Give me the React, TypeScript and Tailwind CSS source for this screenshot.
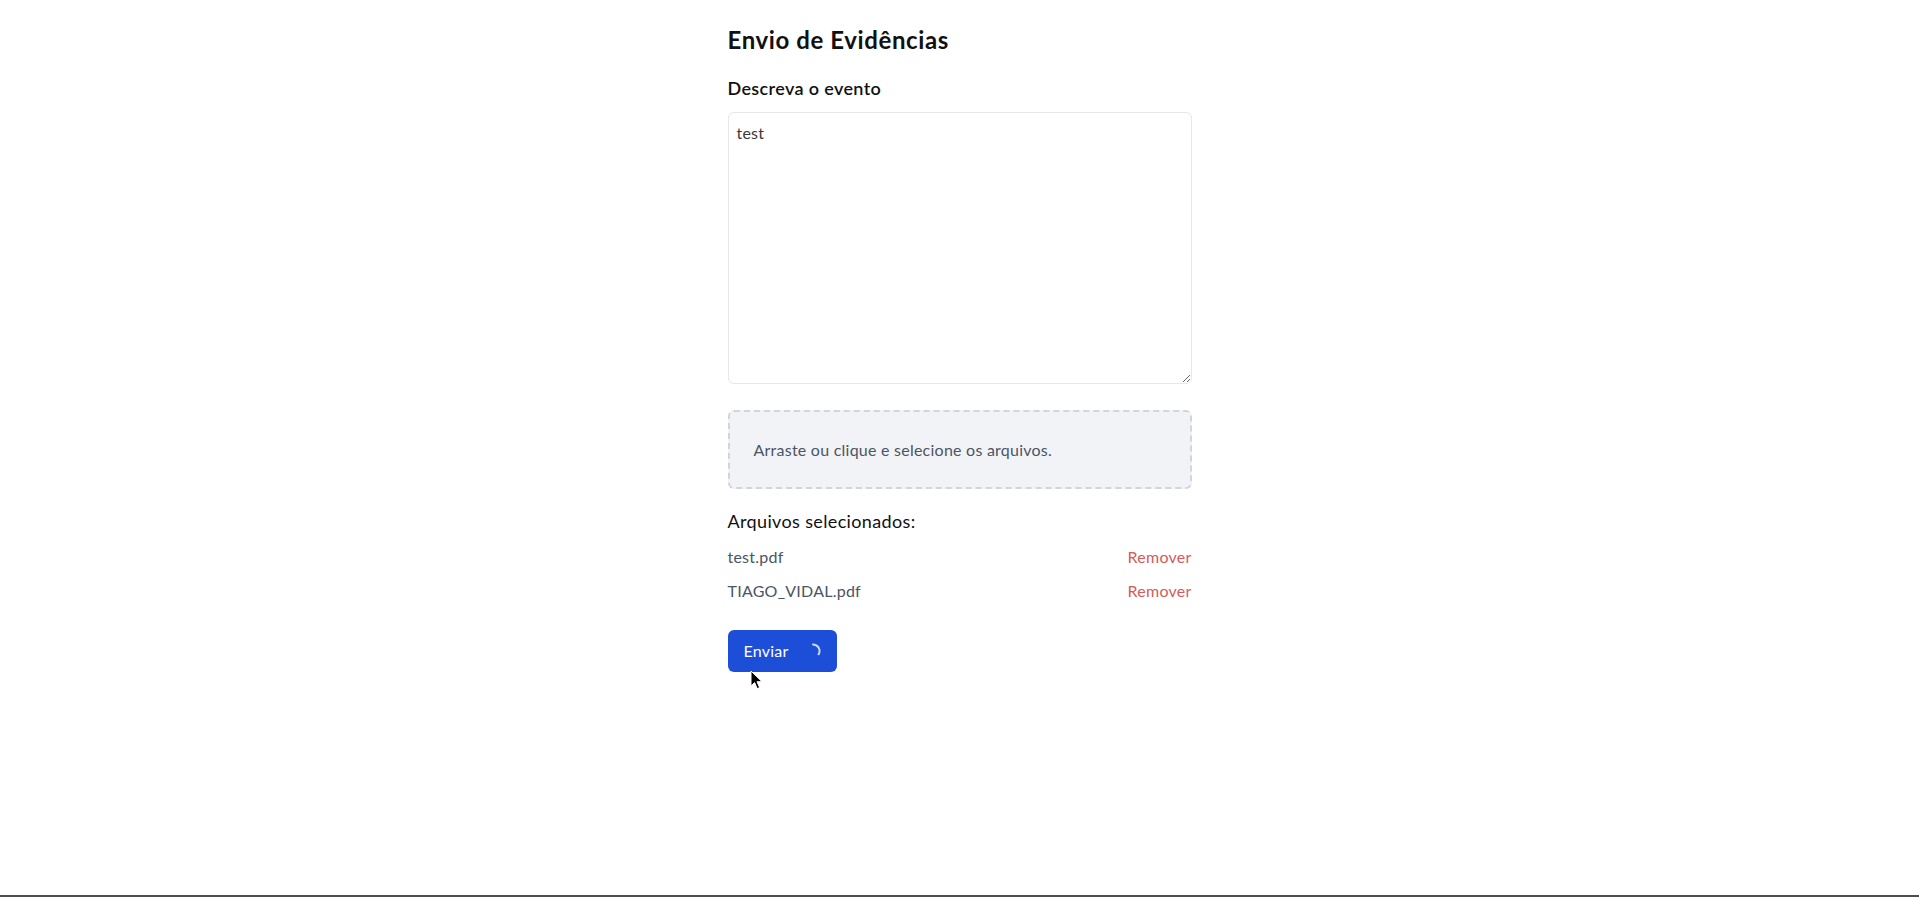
import { useState } from 'react'

const FONT = "font-['Lato','Noto_Sans',sans-serif]"

const initialFiles = ['test.pdf', 'TIAGO_VIDAL.pdf']

function Spinner() {
  return (
    <svg width="16" height="16" viewBox="0 0 16 16" fill="none" className="ml-4">
      <path
        d="M8 1.5 A6.5 6.5 0 0 1 13.6 11.3"
        stroke="#c7d7fb"
        strokeWidth="2"
        strokeLinecap="round"
      />
    </svg>
  )
}

function Cursor() {
  return (
    <svg
      width="13"
      height="20"
      viewBox="0 0 13 20"
      className="pointer-events-none absolute left-[750px] top-[670px]"
    >
      <path
        d="M1 1 L1 16 L4.6 12.6 L7.2 18.6 L9.6 17.6 L7 11.7 L12 11.7 Z"
        fill="#000"
        stroke="#fff"
        strokeWidth="1"
        strokeLinejoin="round"
      />
    </svg>
  )
}

export default function App() {
  const [text, setText] = useState('test')
  const [files, setFiles] = useState(initialFiles)

  return (
    <div className={`relative flex min-h-screen flex-col bg-white tracking-[0.015em] ${FONT}`}>
      <main className="flex-1">
        <div className="mx-auto flex max-w-lg flex-col px-6 pt-6">
          <h1 className="text-2xl leading-8 font-bold tracking-[0.025em] text-[#111]">
            Envio de Evidências
          </h1>

          <label
            htmlFor="evento"
            className="mt-[18px] text-lg leading-7 font-semibold tracking-[0.02em] text-[#111]"
          >
            Descreva o evento
          </label>
          <textarea
            id="evento"
            value={text}
            onChange={(e) => setText(e.target.value)}
            className="mt-[10px] block h-[272px] w-full rounded-md border border-gray-200 p-2 text-base leading-6 text-[#3a3a3a] outline-none"
          />

          <div className="mt-[26px] flex h-[79px] cursor-pointer items-center rounded-md border-2 border-dashed border-gray-300 bg-[#f2f3f6] px-6">
            <p className="text-base text-gray-600">Arraste ou clique e selecione os arquivos.</p>
          </div>

          <h2 className="mt-[18px] text-lg leading-7 font-normal tracking-[0.02em] text-[#111]">
            Arquivos selecionados:
          </h2>
          <ul className="mt-[10px] flex flex-col gap-[10px]">
            {files.map((name) => (
              <li key={name} className="flex items-center justify-between text-base leading-6">
                <span className="text-gray-600">{name}</span>
                <button
                  type="button"
                  onClick={() => setFiles(files.filter((f) => f !== name))}
                  className="text-[#d55b5b]"
                >
                  Remover
                </button>
              </li>
            ))}
          </ul>

          <div className="mt-[27px]">
            <button
              type="button"
              className="inline-flex h-[42px] items-center rounded-md bg-[#1d4ed8] px-4 text-base text-white"
            >
              Enviar
              <Spinner />
            </button>
          </div>
        </div>
      </main>
      <div className="h-[2px] w-full bg-[#4d4d4d]" />
      <Cursor />
    </div>
  )
}
